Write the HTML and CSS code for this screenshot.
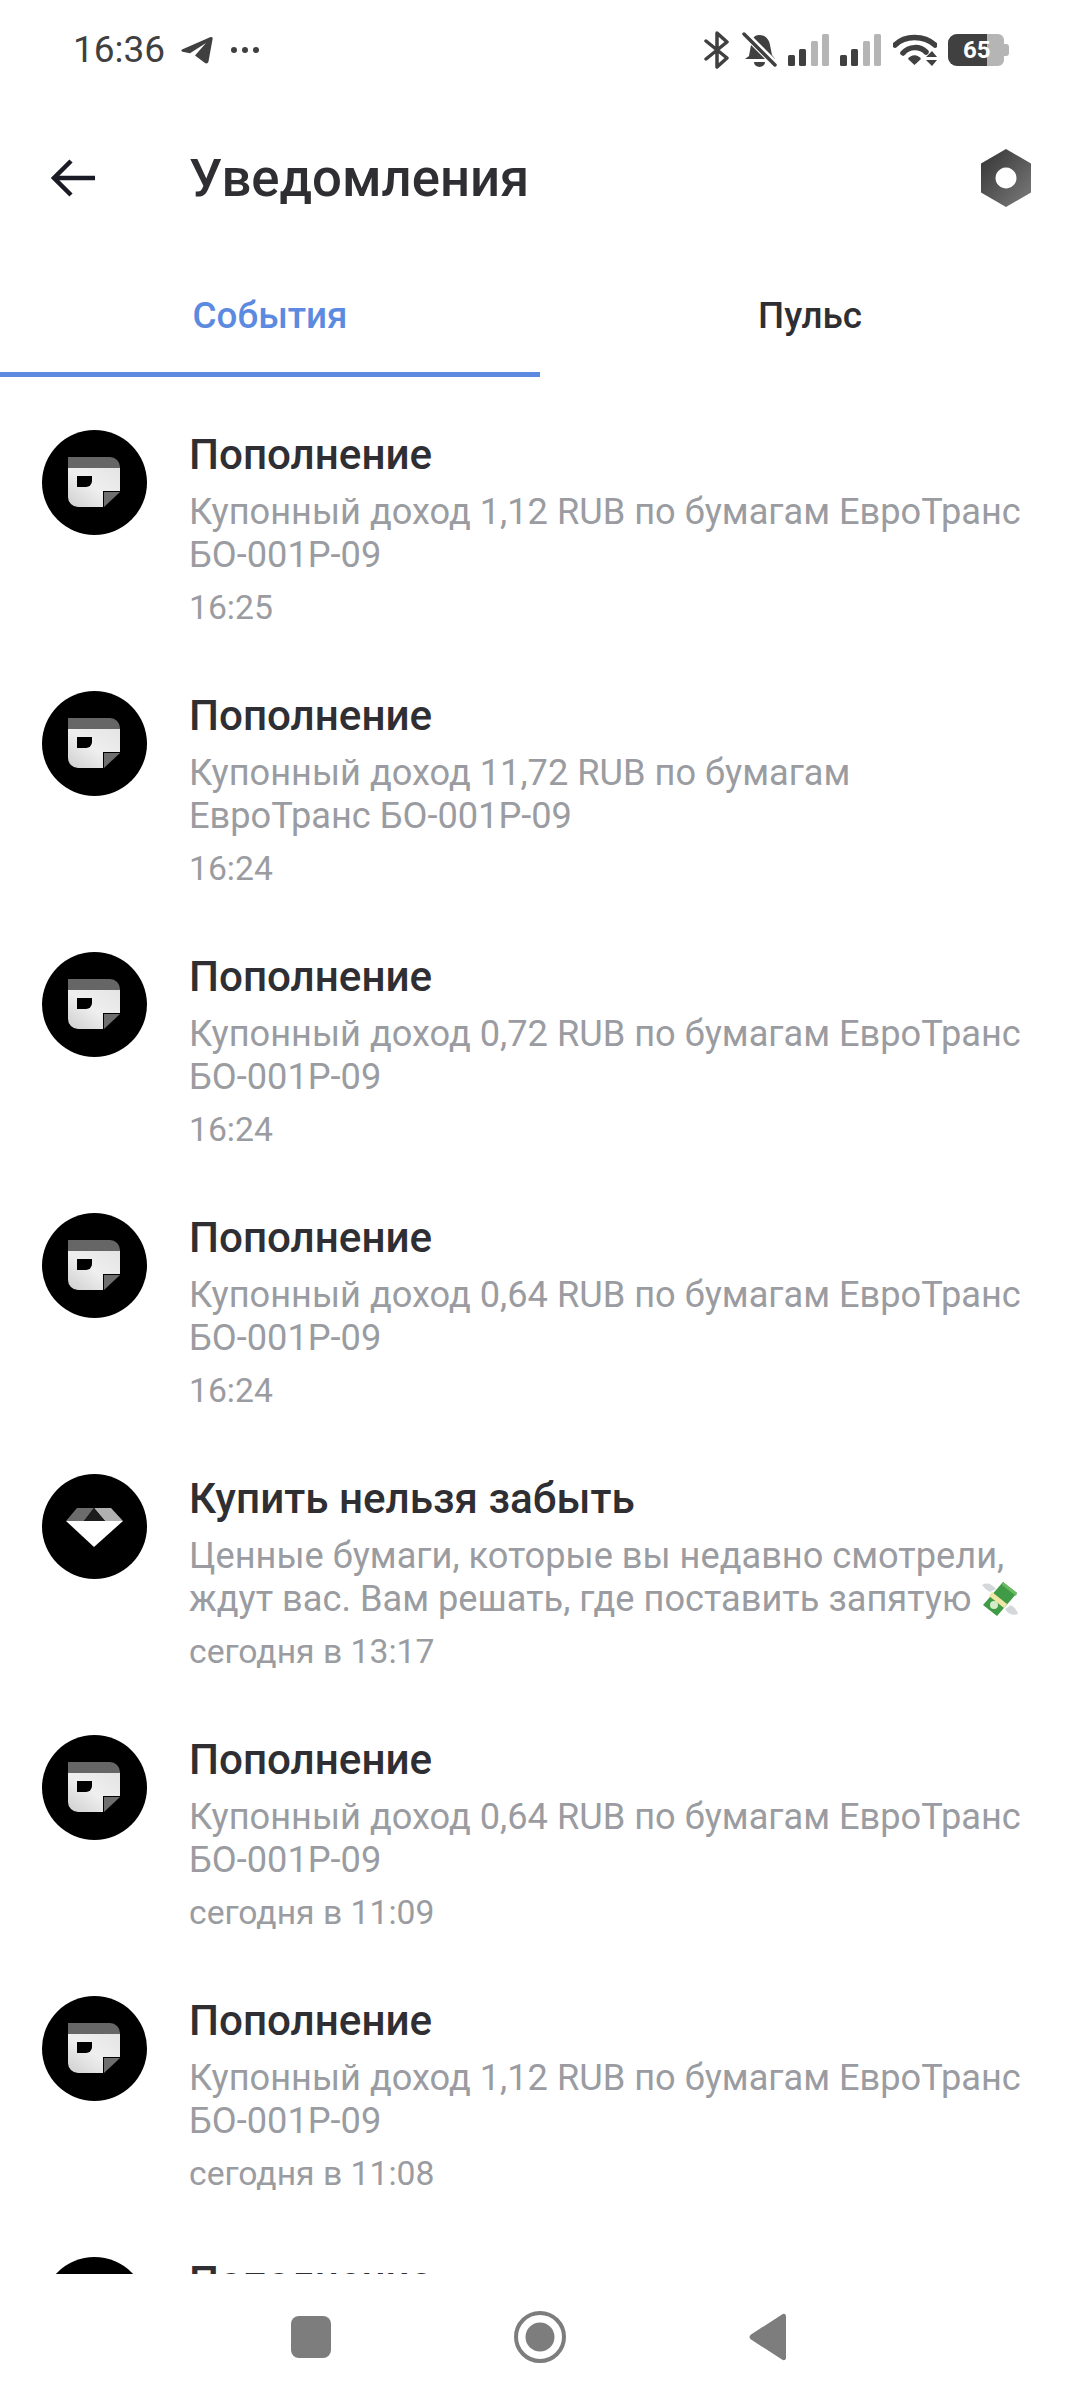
FILE: index.html
```html
<!DOCTYPE html>
<html>
<head>
    <title>Уведомления</title>
    <link rel="stylesheet" href="styles.css">
</head>
<body>
    <svg class="sprites" width="0" height="0">
        <defs>
            <linearGradient id="paper" x1="0" y1="1" x2="1" y2="0">
                <stop offset="0" stop-color="#cfcfcf"/>
                <stop offset="0.5" stop-color="#efefef"/>
                <stop offset="1" stop-color="#e4e4e4"/>
            </linearGradient>
            <linearGradient id="nutFill" x1="0" y1="0" x2="1" y2="1">
                <stop offset="0" stop-color="#333"/>
                <stop offset="1" stop-color="#7c7c7c"/>
            </linearGradient>
            <symbol id="walletIcon" viewBox="0 0 105 105">
                <circle cx="52.5" cy="52.5" r="52.5" fill="#000"/>
                <path d="M26 27H68a10 10 0 0 1 10 10v1H26Z" fill="#666"/>
                <path d="M26 38H78V61H61V77H36a10 10 0 0 1-10-10Z" fill="url(#paper)"/>
                <path d="M62 62H78L62 77Z" fill="#6e6e6e"/>
                <path d="M35 46H50V51a6 6 0 0 1-6 6H35Z" fill="#000"/>
            </symbol>
            <symbol id="gemIcon" viewBox="0 0 105 105">
                <circle cx="52.5" cy="52.5" r="52.5" fill="#000"/>
                <path d="M35 34H52L42 47H24Z" fill="#6c6c6c"/>
                <path d="M52 34H69L81 47H63Z" fill="#b0b0b0"/>
                <path d="M52 34L63 47H42Z" fill="#1c1c1c"/>
                <path d="M24 47H81L52 73Z" fill="#fff"/>
            </symbol>
        </defs>
    </svg>

    <div class="screen">
        <div class="statusbar">
            <div class="status-left">
                <span class="clock">16:36</span>
                <svg class="ic-telegram" width="32" height="28" viewBox="0 0 32 28"><path d="M1 13.500L29 1.200C31 .5 32 1.500 31.600 3L27.500 25.500C27 27.500 25.500 28 24 27L14 19.500 25 7 9 17.200 1.500 15.800C.3 15.400 0 14 1 13.500Z" fill="#404040"/></svg>
                <svg class="ic-dots" width="30" height="8" viewBox="0 0 30 8"><circle cx="4" cy="4" r="3" fill="#404040"/><circle cx="15" cy="4" r="3" fill="#404040"/><circle cx="26" cy="4" r="3" fill="#404040"/></svg>
            </div>
            <div class="status-right">
                <svg width="26" height="38" viewBox="0 0 26 38"><path d="M2 10L23 27 13 36V2L23 11 2 28" fill="none" stroke="#404040" stroke-width="3.500" stroke-linecap="round" stroke-linejoin="round"/></svg>
                <svg class="ic-bell" width="36" height="36" viewBox="0 0 36 36"><path d="M17 3c6 0 10 4 11 10l2 10 3 4H3l4-3 2-11c1-6 3-10 8-10Z" fill="#404040"/><path d="M12 30h11a5.500 5 0 0 1-11 0Z" fill="#404040"/><path d="M2 1L34 33" stroke="#fff" stroke-width="7"/><path d="M2 2L33 33" stroke="#404040" stroke-width="3.500" stroke-linecap="round"/></svg>
                <svg class="ic-signal" width="42" height="33" viewBox="0 0 42 33"><rect x="0" y="21" width="7" height="11" rx="1.500" fill="#404040"/><rect x="11" y="15" width="7" height="17" rx="1.500" fill="#404040"/><rect x="23" y="7" width="7" height="25" rx="1.500" fill="#b5b5b5"/><rect x="34" y="0" width="7" height="32" rx="1.500" fill="#b5b5b5"/></svg>
                <svg class="ic-signal" width="42" height="33" viewBox="0 0 42 33"><rect x="0" y="21" width="7" height="11" rx="1.500" fill="#404040"/><rect x="11" y="15" width="7" height="17" rx="1.500" fill="#404040"/><rect x="23" y="7" width="7" height="25" rx="1.500" fill="#b5b5b5"/><rect x="34" y="0" width="7" height="32" rx="1.500" fill="#b5b5b5"/></svg>
                <svg class="ic-wifi" width="44" height="33" viewBox="0 0 44 33"><path d="M2 11C12 1 31 1 42 11" fill="none" stroke="#404040" stroke-width="5.500" stroke-linecap="round"/><path d="M10 19C16 12 27 12 33 18" fill="none" stroke="#404040" stroke-width="5.500" stroke-linecap="round"/><path d="M15 25C18 20 25 20 28 25L21.500 31Z" fill="#404040"/><path d="M33 23L39 17 44 23ZM33 26H44L39 32Z" fill="#404040"/></svg>
                <div class="battery">
                    <div class="battery-level"></div>
                    <span class="battery-num">65</span>
                    <div class="battery-cap"></div>
                </div>
            </div>
        </div>

        <div class="appbar">
            <svg class="ic-back" width="46" height="40" viewBox="0 0 46 40"><path d="M44 20H3M20 3L3 20 20 37" fill="none" stroke="#1b1b26" stroke-width="4.500"/></svg>
            <h1 class="page-title">Уведомления</h1>
            <svg class="ic-nut" width="52" height="58" viewBox="0 0 52 58"><path fill-rule="evenodd" d="M26 0L51 14.500V43.500L26 58 1 43.500V14.500ZM26 18.500a10.500 10.500 0 1 0 .01 0Z" fill="url(#nutFill)"/></svg>
        </div>

        <div class="tabs">
            <div class="tab active">События</div>
            <div class="tab">Пульс</div>
        </div>

        <div class="list">
            <div class="row">
                <svg class="avatar"><use href="#walletIcon"/></svg>
                <div class="row-text">
                    <div class="row-title">Пополнение</div>
                    <div class="row-body">Купонный доход 1,12 RUB по бумагам ЕвроТранс БО-001Р-09</div>
                    <div class="row-time">16:25</div>
                </div>
            </div>
            <div class="row">
                <svg class="avatar"><use href="#walletIcon"/></svg>
                <div class="row-text">
                    <div class="row-title">Пополнение</div>
                    <div class="row-body">Купонный доход 11,72 RUB по бумагам ЕвроТранс БО-001Р-09</div>
                    <div class="row-time">16:24</div>
                </div>
            </div>
            <div class="row">
                <svg class="avatar"><use href="#walletIcon"/></svg>
                <div class="row-text">
                    <div class="row-title">Пополнение</div>
                    <div class="row-body">Купонный доход 0,72 RUB по бумагам ЕвроТранс БО-001Р-09</div>
                    <div class="row-time">16:24</div>
                </div>
            </div>
            <div class="row">
                <svg class="avatar"><use href="#walletIcon"/></svg>
                <div class="row-text">
                    <div class="row-title">Пополнение</div>
                    <div class="row-body">Купонный доход 0,64 RUB по бумагам ЕвроТранс БО-001Р-09</div>
                    <div class="row-time">16:24</div>
                </div>
            </div>
            <div class="row">
                <svg class="avatar"><use href="#gemIcon"/></svg>
                <div class="row-text">
                    <div class="row-title">Купить нельзя забыть</div>
                    <div class="row-body">Ценные бумаги, которые вы недавно смотрели, ждут вас. Вам решать, где поставить запятую
                        <svg class="emoji" width="40" height="40" viewBox="0 0 40 40">
                            <path d="M2 6C7 3 12 5 16 10L10 13C7 11 4 9 2 6Z" fill="#d5d8da"/>
                            <path d="M38 35C33 37 28 35 25 30L31 26C34 28 37 31 38 35Z" fill="#d5d8da"/>
                            <path d="M23 3L37 14 17 37 3 26Z" fill="#3f9b46"/>
                            <path d="M23 3L37 14 36 17 22 6Z" fill="#6cbb63"/>
                            <path d="M12 13L27 25 24 29 9 17Z" fill="#f2e6a6"/>
                            <circle cx="14" cy="26" r="4" fill="#d6ecc9"/>
                        </svg>
                    </div>
                    <div class="row-time">сегодня в 13:17</div>
                </div>
            </div>
            <div class="row">
                <svg class="avatar"><use href="#walletIcon"/></svg>
                <div class="row-text">
                    <div class="row-title">Пополнение</div>
                    <div class="row-body">Купонный доход 0,64 RUB по бумагам ЕвроТранс БО-001Р-09</div>
                    <div class="row-time">сегодня в 11:09</div>
                </div>
            </div>
            <div class="row">
                <svg class="avatar"><use href="#walletIcon"/></svg>
                <div class="row-text">
                    <div class="row-title">Пополнение</div>
                    <div class="row-body">Купонный доход 1,12 RUB по бумагам ЕвроТранс БО-001Р-09</div>
                    <div class="row-time">сегодня в 11:08</div>
                </div>
            </div>
            <div class="row">
                <svg class="avatar"><use href="#walletIcon"/></svg>
                <div class="row-text">
                    <div class="row-title">Пополнение</div>
                </div>
            </div>
        </div>

        <div class="navbar">
            <div class="nav-square"></div>
            <svg width="52" height="52" viewBox="0 0 52 52"><circle cx="26" cy="26" r="24" fill="none" stroke="#7d7d7d" stroke-width="4"/><circle cx="26" cy="26" r="14.500" fill="#7d7d7d"/></svg>
            <svg width="37" height="48" viewBox="0 0 37 48"><path d="M33 1.500C35 0 37 1 37 3.500V44.500C37 47 35 48 33 46.500L2 26.500C0 25 0 23 2 21.500Z" fill="#7d7d7d"/></svg>
        </div>
    </div>
</body>
</html>
```

FILE: styles.css
```css
body {
    margin: 0;
    background-color: #fff;
    font-family: Roboto, "Noto Sans", sans-serif;
}

.sprites {
    display: block;
    height: 0;
}

.screen {
    width: 1080px;
    height: 2400px;
    display: flex;
    flex-direction: column;
    overflow: hidden;
}

/* status bar */
.statusbar {
    height: 100px;
    flex-shrink: 0;
    display: flex;
    align-items: center;
    justify-content: space-between;
    padding: 0 76px 0 73px;
    color: #404040;
}

.status-left {
    display: flex;
    align-items: center;
}

.clock {
    font-size: 37px;
    line-height: 42px;
    margin-right: 16px;
}

.ic-dots {
    margin-left: 17px;
}

.status-right {
    display: flex;
    align-items: center;
}

.ic-bell {
    margin-left: 12px;
}

.ic-signal {
    margin-left: 10px;
}

.ic-wifi {
    margin-left: 11px;
}

.battery {
    position: relative;
    width: 56px;
    height: 32px;
    margin-left: 11px;
    background-color: #b5b5b5;
    border-radius: 9px 6px 6px 9px;
}

.battery-level {
    width: 39px;
    height: 32px;
    background-color: #404040;
    border-radius: 9px 0 0 9px;
}

.battery-num {
    position: absolute;
    left: 15px;
    top: 0;
    font-size: 24px;
    line-height: 32px;
    font-weight: 700;
    color: #fff;
}

.battery-cap {
    position: absolute;
    right: -5px;
    top: 10px;
    width: 5px;
    height: 12px;
    background-color: #b5b5b5;
    border-radius: 0 3px 3px 0;
}

/* app bar */
.appbar {
    height: 155px;
    flex-shrink: 0;
    display: flex;
    align-items: center;
    padding: 0 48px 0 51px;
}

.page-title {
    flex: 1;
    margin: 0 0 0 92px;
    font-size: 52.700px;
    font-weight: 500;
    color: #2f2f33;
}

/* tabs */
.tabs {
    height: 122px;
    flex-shrink: 0;
    display: flex;
}

.tab {
    flex: 1;
    height: 117px;
    line-height: 122px;
    text-align: center;
    font-size: 36.800px;
    font-weight: 500;
    color: #2f2f33;
}

.tab.active {
    color: #5b8ae0;
    border-bottom: 5px solid #5b8ae0;
}

/* list */
.list {
    flex: 1;
    min-height: 0;
    overflow: hidden;
}

.row {
    height: 261px;
    box-sizing: border-box;
    padding: 53px 48px 0 42px;
    display: flex;
}

.avatar {
    width: 105px;
    height: 105px;
    flex-shrink: 0;
    margin-right: 42px;
}

.row-text {
    flex: 1;
}

.row-title {
    font-size: 42.200px;
    line-height: 50px;
    font-weight: 500;
    color: #2f2f33;
}

.row-body {
    margin-top: 11px;
    font-size: 36.200px;
    line-height: 42.500px;
    color: #9a9ca1;
}

.row-time {
    margin-top: 10px;
    font-size: 33.700px;
    line-height: 44px;
    color: #9a9ca1;
}

.emoji {
    vertical-align: -8px;
}

/* bottom navigation */
.navbar {
    height: 126px;
    flex-shrink: 0;
    background-color: #fff;
    display: flex;
    align-items: center;
    justify-content: center;
    gap: 183px;
    padding-right: 3px;
}

.nav-square {
    width: 40px;
    height: 42px;
    background-color: #7d7d7d;
    border-radius: 8px;
}
```
